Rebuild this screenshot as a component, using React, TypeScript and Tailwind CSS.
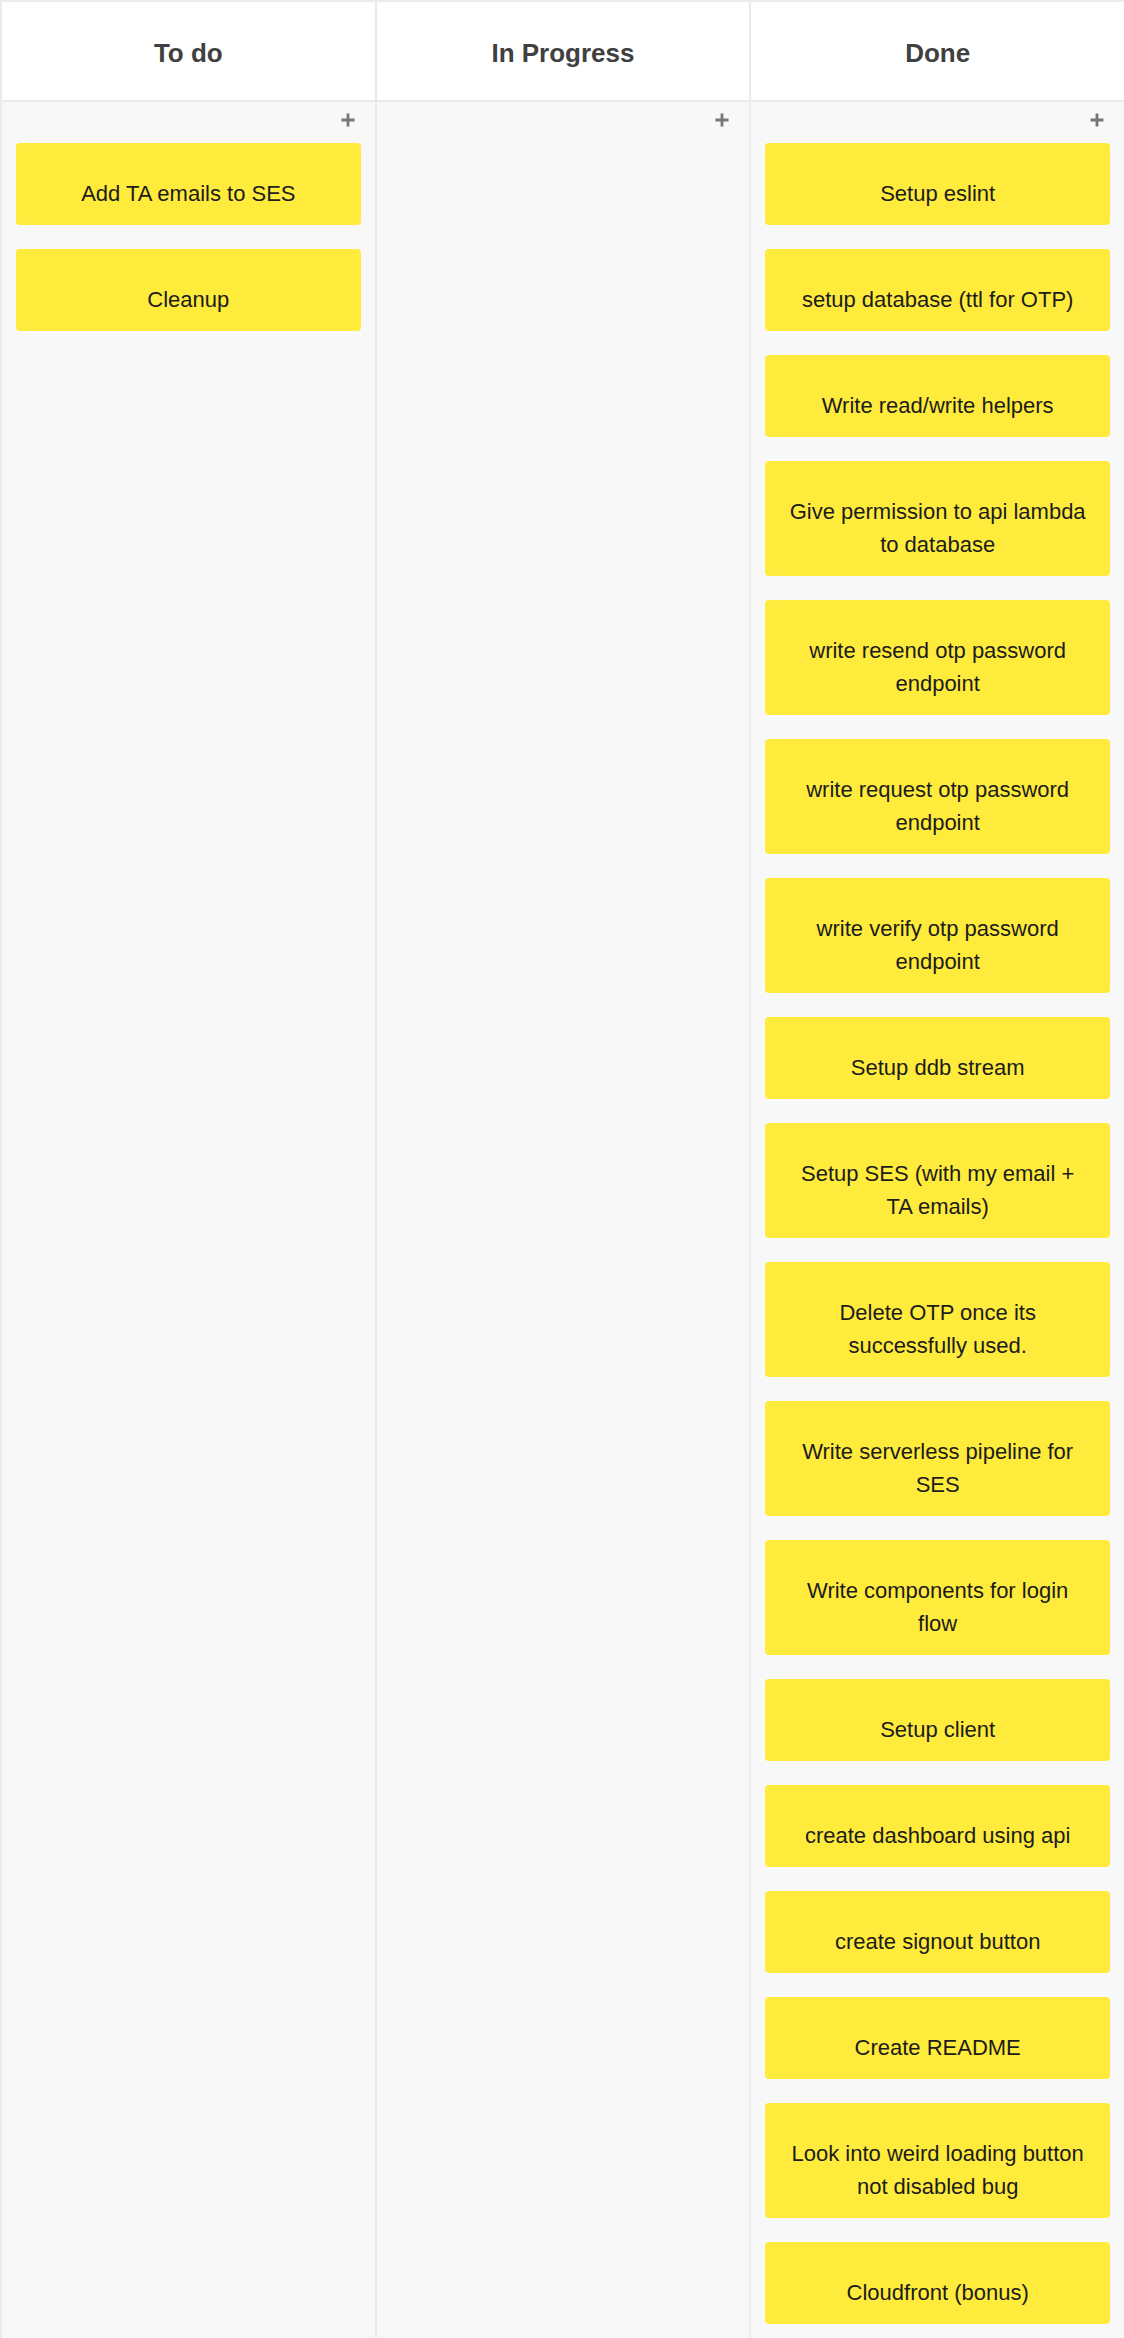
import React from "react";

type Column = {
    title: string;
    cards: string[];
};

const columns: Column[] = [
    {
        title: "To do",
        cards: ["Add TA emails to SES", "Cleanup"],
    },
    {
        title: "In Progress",
        cards: [],
    },
    {
        title: "Done",
        cards: [
            "Setup eslint",
            "setup database (ttl for OTP)",
            "Write read/write helpers",
            "Give permission to api lambda to database",
            "write resend otp password endpoint",
            "write request otp password endpoint",
            "write verify otp password endpoint",
            "Setup ddb stream",
            "Setup SES (with my email + TA emails)",
            "Delete OTP once its successfully used.",
            "Write serverless pipeline for SES",
            "Write components for login flow",
            "Setup client",
            "create dashboard using api",
            "create signout button",
            "Create README",
            "Look into weird loading button not disabled bug",
            "Cloudfront (bonus)",
        ],
    },
];

function PlusIcon() {
    return (
        <svg width="14" height="14" viewBox="0 0 14 14" className="block">
            <path d="M7 0.5v13M0.5 7h13" stroke="#767676" strokeWidth="2.8" />
        </svg>
    );
}

function Card({ text }: { text: string }) {
    return (
        <div className="mx-[14px] rounded-[4px] bg-[#ffeb3b] px-[20px] pt-[34px] pb-[15px] text-center text-[22px] leading-[33px] text-[#1c1c1c]">
            {text}
        </div>
    );
}

function BoardColumn({ column }: { column: Column }) {
    return (
        <div className="flex flex-col border-l-2 border-[#ebebeb]">
            <div className="flex h-[102px] items-center justify-center border-y-2 border-[#ebebeb] bg-white pt-[4px]">
                <h2 className="text-[26px] font-bold text-[#404040]">{column.title}</h2>
            </div>
            <div className="flex-1 bg-[#f8f8f8] pt-[11px] pb-[14px]">
                <div className="flex justify-end pr-[20px]">
                    <button className="cursor-pointer">
                        <PlusIcon />
                    </button>
                </div>
                <div className="mt-[16px] flex flex-col gap-[24px]">
                    {column.cards.map((card) => (
                        <Card key={card} text={card} />
                    ))}
                </div>
            </div>
        </div>
    );
}

export default function App() {
    return (
        <div className="grid min-h-screen w-full grid-cols-3 font-['Liberation_Sans',Arial,sans-serif]">
            {columns.map((col) => (
                <BoardColumn key={col.title} column={col} />
            ))}
        </div>
    );
}
